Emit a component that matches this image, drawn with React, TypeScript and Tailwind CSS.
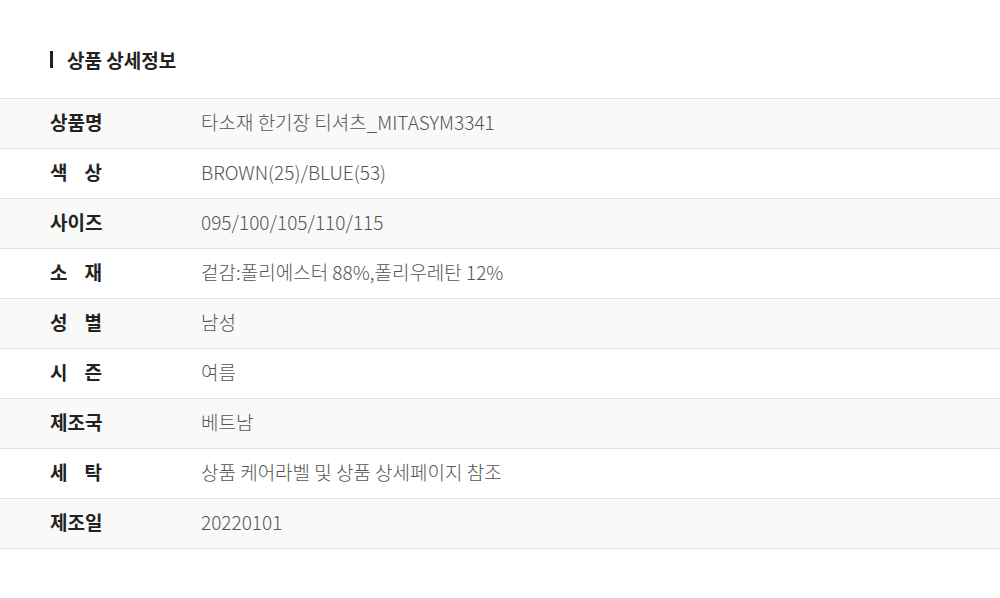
import React from "react";

const rows: { label: string; value: string; spread?: boolean }[] = [
  { label: "상품명", value: "타소재 한기장 티셔츠_MITASYM3341" },
  { label: "색상", value: "BROWN(25)/BLUE(53)", spread: true },
  { label: "사이즈", value: "095/100/105/110/115" },
  { label: "소재", value: "겉감:폴리에스터 88%,폴리우레탄 12%", spread: true },
  { label: "성별", value: "남성", spread: true },
  { label: "시즌", value: "여름", spread: true },
  { label: "제조국", value: "베트남" },
  { label: "세탁", value: "상품 케어라벨 및 상품 상세페이지 참조", spread: true },
  { label: "제조일", value: "20220101" },
];

export default function App() {
  return (
    <div
      className="w-[1000px] h-[598px] bg-white"
      style={{ fontFamily: '"Noto Sans CJK KR", "Noto Sans", sans-serif' }}
    >
      <div className="pt-[47px] pl-[50px] h-[98px]">
        <div className="flex items-center h-[24px]">
          <span className="w-[3px] h-[17px] bg-[#222]" />
          <span className="ml-[14px] text-[19px] font-bold text-[#222] leading-none">상품 상세정보</span>
        </div>
      </div>
      <div className="border-t border-[#dddddd]">
        {rows.map((r, i) => (
          <div
            key={r.label}
            className={`flex items-center h-[50px] pb-[3px] border-b border-[#dddddd] ${i % 2 === 0 ? "bg-[#f9f9f9]" : "bg-white"}`}
          >
            <div className="w-[201px] shrink-0 pl-[50px]">
              {r.spread ? (
                <div className="flex justify-between w-[52px] text-[19px] font-bold text-[#222]">
                  {r.label.split("").map((c, j) => (
                    <span key={j}>{c}</span>
                  ))}
                </div>
              ) : (
                <div className="text-[19px] font-bold text-[#222]">{r.label}</div>
              )}
            </div>
            <div className="text-[19px] font-light text-[#555]">{r.value}</div>
          </div>
        ))}
      </div>
    </div>
  );
}
